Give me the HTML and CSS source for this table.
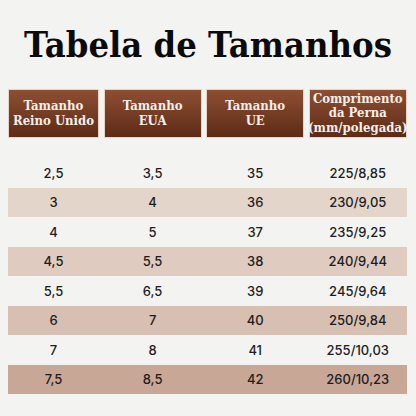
FILE: index.html
```html
<html>
  <head>
    <meta name="viewport" content="width=device-width, initial-scale=1.0">
    <link rel="stylesheet" href="styles.css">
  </head>
  <body>
    <h1 class="title">Tabela de Tamanhos</h1>

    <div class="table">
      <div class="head">
        <div class="cell">Tamanho<br>Reino Unido</div>
        <div class="cell">Tamanho<br>EUA</div>
        <div class="cell">Tamanho<br>UE</div>
        <div class="cell">Comprimento<br>da Perna<br>(mm/polegada)</div>
      </div>

      <div class="rows">
        <div class="row"><span>2,5</span><span>3,5</span><span>35</span><span>225/8,85</span></div>
        <div class="row shade1"><span>3</span><span>4</span><span>36</span><span>230/9,05</span></div>
        <div class="row"><span>4</span><span>5</span><span>37</span><span>235/9,25</span></div>
        <div class="row shade2"><span>4,5</span><span>5,5</span><span>38</span><span>240/9,44</span></div>
        <div class="row"><span>5,5</span><span>6,5</span><span>39</span><span>245/9,64</span></div>
        <div class="row shade3"><span>6</span><span>7</span><span>40</span><span>250/9,84</span></div>
        <div class="row"><span>7</span><span>8</span><span>41</span><span>255/10,03</span></div>
        <div class="row shade4"><span>7,5</span><span>8,5</span><span>42</span><span>260/10,23</span></div>
      </div>
    </div>
  </body>
</html>
```
FILE: styles.css
```css
body {
  margin: 0;
  background-color: #f3f3f2;
  font-family: "Inter", "Liberation Sans", sans-serif;
}
.title {
  margin: 0;
  padding-top: 26px;
  height: 63px;
  font-family: "DejaVu Serif Condensed", "DejaVu Serif", serif;
  font-stretch: condensed;
  font-size: 36px;
  line-height: 36px;
  font-weight: bold;
  text-align: center;
  color: #0b0b0b;
}
.table {
  padding: 0 9px 0 8px;
}
.head, .row {
  display: grid;
  grid-template-columns: 91px 98px 98px 98px;
  column-gap: 4.6px;
}
.head .cell {
  height: 49px;
  box-sizing: border-box;
  display: flex;
  align-items: center;
  justify-content: center;
  text-align: center;
  border: 1px solid #e9d3c6;
  background: linear-gradient(#8e4f33, #5d2b16);
  color: #f7efe9;
  font-family: "DejaVu Serif Condensed", "DejaVu Serif", serif;
  font-stretch: condensed;
  font-weight: bold;
  font-size: 13px;
  line-height: 14.5px;
}
.rows {
  margin-top: 20px;
}
.row {
  height: 29.5px;
  align-items: center;
  text-align: center;
  font-size: 13px;
  font-weight: 500;
  color: #1d1d1d;
}
.shade1 { background-color: #e4d5cb; }
.shade2 { background-color: #dfcbbf; }
.shade3 { background-color: #d7bfb1; }
.shade4 { background-color: #c9a796; }
```
